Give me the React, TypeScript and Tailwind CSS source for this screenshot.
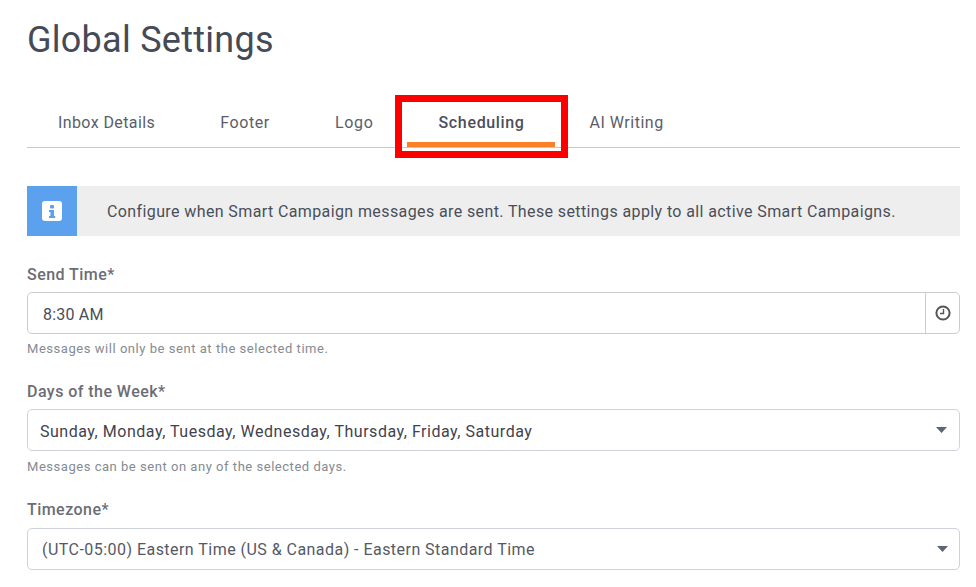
const font = "font-['Roboto','Liberation_Sans',sans-serif]";

const tabs = [
  { label: "Inbox Details", cls: "tracking-[0.4px] text-[#5a5e69]" },
  { label: "Footer", cls: "tracking-[0.6px] text-[#5a5e69]" },
  { label: "Logo", cls: "tracking-[0.7px] text-[#5a5e69]" },
  { label: "Scheduling", cls: "font-medium tracking-[0.65px] text-[#4b4f5b]" },
  { label: "AI Writing", cls: "tracking-[0.5px] text-[#5a5e69]" },
];

function Caret() {
  return (
    <svg width="11" height="6" viewBox="0 0 11 6" className="shrink-0">
      <path d="M0 0h11L5.5 6z" fill="#5f6673" />
    </svg>
  );
}

function Label({ children }: { children: string }) {
  return <div className="text-[16px] leading-5 font-medium text-[#6b6d76] tracking-[0.45px]">{children}</div>;
}

export default function App() {
  return (
    <div className={`${font} h-[587px] w-[976px] overflow-hidden bg-white pl-[27px] pr-[16px] pt-[17px] text-[#454a56]`}>
      <h1 className="text-[36px] leading-[46px] font-normal tracking-[0.27px] text-[#454a56]">Global Settings</h1>

      {/* Tabs */}
      <div className="mt-[32px] flex h-[53px] border-b border-[#c8c8c8] gap-px">
        {tabs.map((t) => (
          <div key={t.label} className="relative flex h-[52px] items-center px-[32px] pt-[4px] first:pl-[31px]">
            <span className={`text-[16px] ${t.cls}`}>{t.label}</span>
            {t.label === "Scheduling" && (
              <>
                <div className="absolute bottom-0 left-0 right-[2px] h-[5px] bg-[#f98026]" />
                <div className="absolute top-0 -bottom-[11px] -left-[12px] -right-[11px] border-[7px] border-[#ff0000]" />
              </>
            )}
          </div>
        ))}
      </div>

      {/* Info banner */}
      <div className="mt-[38px] flex h-[50px] items-center bg-[#eeeeee]">
        <div className="flex h-full w-[50px] items-center justify-center bg-[#5ca1ee]">
          <svg width="20" height="20" viewBox="0 0 20 20">
            <rect width="20" height="20" rx="3" fill="#fff" />
            <rect x="8" y="4" width="4" height="3.4" rx="1" fill="#5ca1ee" />
            <path d="M7 9h5v6h1.2v2H7v-2h1.4v-4H7z" fill="#5ca1ee" />
          </svg>
        </div>
        <p className="ml-[30px] pt-[2px] text-[16px] tracking-[0.39px] text-[#4a4e59] whitespace-nowrap">
          Configure when Smart Campaign messages are sent. These settings apply to all active Smart Campaigns.
        </p>
      </div>

      {/* Send time */}
      <div className="mt-[29px]">
        <Label>Send Time*</Label>
        <div className="mt-[7px] flex h-[42px] rounded-[5px] border border-[#cccccc]">
          <div className="flex flex-1 items-center pl-[15px] pt-[4px] text-[16px] tracking-[0.2px] text-[#4a4e59]">8:30 AM</div>
          <div className="flex w-[34px] items-center justify-center border-l border-[#cccccc]">
            <svg width="16" height="16" viewBox="0 0 16 16" fill="none" stroke="#555" strokeWidth="2">
              <circle cx="8" cy="8" r="6.6" />
              <path d="M8.5 4v4.5H5" strokeWidth="1.4" />
            </svg>
          </div>
        </div>
        <p className="mt-[7px] text-[13px] leading-4 tracking-[0.54px] text-[#858b92]">Messages will only be sent at the selected time.</p>
      </div>

      {/* Days */}
      <div className="mt-[25px]">
        <Label>Days of the Week*</Label>
        <div className="mt-[7px] flex h-[42px] items-center justify-between rounded-[5px] border border-[#cfd2d8] pl-[12px] pr-[12px]">
          <span className="pt-[4px] text-[16px] tracking-[0.52px] text-[#3f434e]">Sunday, Monday, Tuesday, Wednesday, Thursday, Friday, Saturday</span>
          <Caret />
        </div>
        <p className="mt-[8px] text-[13px] leading-4 tracking-[0.53px] text-[#858b92]">Messages can be sent on any of the selected days.</p>
      </div>

      {/* Timezone */}
      <div className="mt-[25px]">
        <Label>Timezone*</Label>
        <div className="mt-[8px] flex h-[42px] items-center justify-between rounded-[5px] border border-[#cfd2d8] pl-[14px] pr-[11px]">
          <span className="pt-[2px] text-[16px] tracking-[0.46px] text-[#555965]">(UTC-05:00) Eastern Time (US &amp; Canada) - Eastern Standard Time</span>
          <Caret />
        </div>
      </div>
    </div>
  );
}
